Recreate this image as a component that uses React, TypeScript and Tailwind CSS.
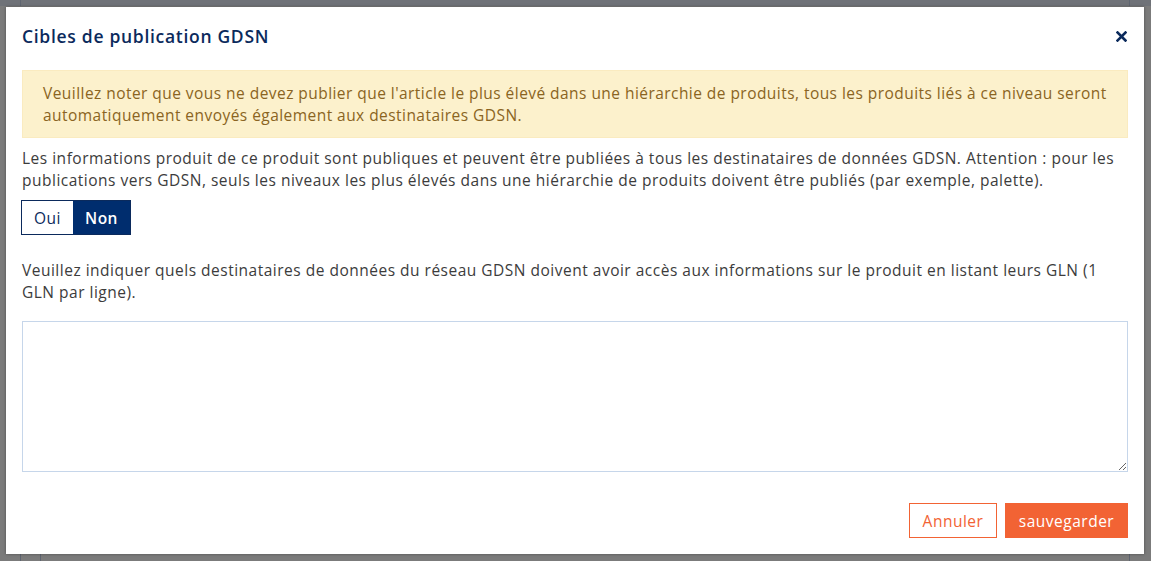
import React, { useState } from "react";

// GDSN publication targets modal
const App = () => {
  const [isPublic, setIsPublic] = useState(false);
  const [glns, setGlns] = useState("");

  return (
    <div
      className="h-[561px] w-[1151px] overflow-hidden bg-[#7b7b7b] relative"
      style={{ fontFamily: '"Open Sans", "Liberation Sans", sans-serif' }}
    >
      {/* page behind the overlay */}
      <div className="absolute left-0 right-0 top-0 h-[6px] bg-[#6f7278]" />
      <div className="absolute left-[20px] top-0 h-[6px] w-px bg-[#5f6570]" />
      <div className="absolute left-[1129px] top-0 h-[6px] w-px bg-[#5f6570]" />
      <div className="absolute left-[20px] bottom-0 h-[7px] w-px bg-[#5f6570]" />
      <div className="absolute left-[40px] bottom-0 h-[7px] w-px bg-[#5f6570]" />
      <div className="absolute left-[1129px] bottom-0 h-[7px] w-px bg-[#5f6570]" />

      <div className="relative pt-[7px] pl-[6px]">
        <div className="w-[1138px] h-[547px] bg-white shadow-[0_0_3px_rgba(0,0,0,0.35)] flex flex-col">
          {/* Header */}
          <div className="h-[58px] flex items-center justify-between px-4">
            <h2 className="text-[17.5px] font-semibold text-[#0b2a5c] tracking-[0.7px]">
              Cibles de publication GDSN
            </h2>
            <button className="text-[#0b2a5c] mr-[1px]" title="Fermer">
              <svg width="11" height="11" viewBox="0 0 11 11">
                <path d="M1.5 1.5 L9.5 9.5 M9.5 1.5 L1.5 9.5" stroke="currentColor" strokeWidth="2.6" strokeLinecap="square" />
              </svg>
            </button>
          </div>

          {/* Body */}
          <div className="px-4 pt-[5px] text-[15.5px] leading-[22px] tracking-[0.5px] text-[#3c3c3c]">
            <div className="bg-[#fcf1cc] border border-[#faebc0] pl-5 pr-4 py-[11px] text-[#8a6422] tracking-[0.45px]">
              Veuillez noter que vous ne devez publier que l'article le plus élevé dans une hiérarchie de produits, tous les produits liés à ce niveau seront automatiquement envoyés également aux destinataires GDSN.
            </div>

            <p className="mt-[9px]">
              Les informations produit de ce produit sont publiques et peuvent être publiées à tous les destinataires de données GDSN. Attention : pour les publications vers GDSN, seuls les niveaux les plus élevés dans une hiérarchie de produits doivent être publiés (par exemple, palette).
            </p>

            <div className="mt-[9px] -ml-px flex h-[35px] w-fit border border-[#0b2a5c]">
              <button
                onClick={() => setIsPublic(true)}
                className={`w-[51px] ${isPublic ? "bg-[#002d6e] text-white" : "bg-white text-[#0b2a5c]"}`}
              >
                Oui
              </button>
              <button
                onClick={() => setIsPublic(false)}
                className={`w-[57px] font-semibold ${!isPublic ? "bg-[#002d6e] text-white" : "bg-white text-[#0b2a5c]"}`}
              >
                Non
              </button>
            </div>

            <p className="mt-[24px]">
              Veuillez indiquer quels destinataires de données du réseau GDSN doivent avoir accès aux informations sur le produit en listant leurs GLN (1 GLN par ligne).
            </p>

            <textarea
              value={glns}
              onChange={(e) => setGlns(e.target.value)}
              className="mt-[18px] block w-full h-[151px] border border-[#c6d6ea] outline-none p-2"
            />

            <div className="mt-[31px] flex justify-end gap-2">
              <button className="h-[35px] w-[88px] border border-[#f26334] text-[#f26334] bg-white">
                Annuler
              </button>
              <button className="h-[35px] w-[123px] bg-[#f26334] text-white font-medium">
                sauvegarder
              </button>
            </div>
          </div>
        </div>
      </div>
    </div>
  );
};

export default App;
